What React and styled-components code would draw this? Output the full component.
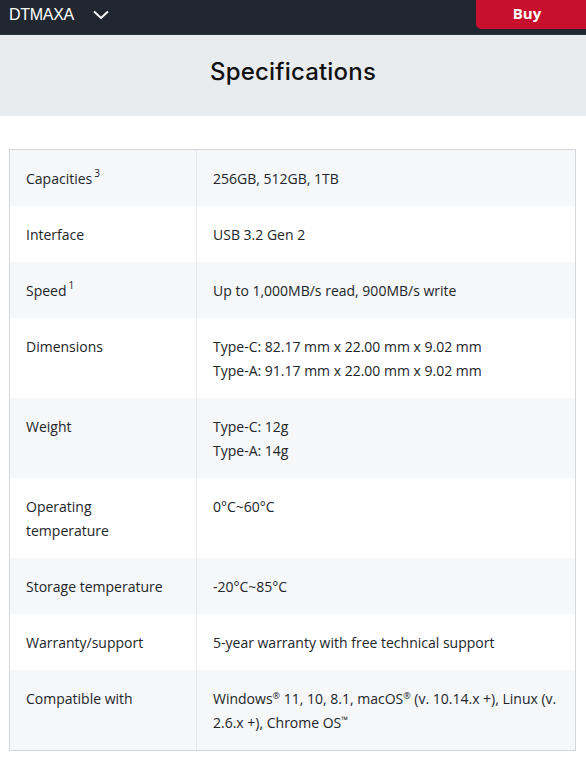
import React from 'react';
import styled, { createGlobalStyle } from 'styled-components';

const GlobalStyle = createGlobalStyle`
  body {
    margin: 0;
    background: #ffffff;
    font-family: "Open Sans", "Noto Sans", sans-serif;
  }
`;

// 상단 바
const TopBar = styled.div`
  height: 34px;
  background: #212731;
  display: flex;
  align-items: flex-start;
  justify-content: space-between;
  border-bottom: 1px solid #2c3440;
`;

const Model = styled.div`
  display: flex;
  align-items: center;
  height: 30px;
  padding-left: 9px;
  color: #ffffff;
  font-family: "Liberation Sans Narrow", "Liberation Sans", sans-serif;
  font-size: 16px;
  letter-spacing: -0.3px;
  gap: 18px;
`;

const BuyButton = styled.button`
  width: 110px;
  height: 29px;
  margin-left: auto;
  border: none;
  border-radius: 0 0 0 5px;
  background: #c8102e;
  color: #ffffff;
  font-family: "Open Sans", sans-serif;
  font-weight: 700;
  font-size: 15px;
  padding: 0 8px 3px 0;
`;

// 제목
const TitleBand = styled.div`
  height: 81px;
  background: #e9ecef;
  display: flex;
  align-items: center;
  justify-content: center;
  padding-bottom: 8px;
  box-sizing: border-box;
`;

const Title = styled.h2`
  margin: 0;
  font-family: Inter, "Noto Sans", sans-serif;
  font-weight: 500;
  font-size: 24px;
  color: #111111;
  letter-spacing: 0.2px;
`;

const Wrap = styled.div`
  padding: 33px 10px 0 9px;
`;

const Table = styled.div`
  border: 1px solid #d4d6d9;
`;

const Row = styled.div`
  display: grid;
  grid-template-columns: 187px 1fr;
  background: ${p => (p.shade ? '#f6f7f9' : '#ffffff')};
`;

const Label = styled.div`
  padding: 17px 16px 15px 16px;
  border-right: 1px solid #e6e8eb;
  font-size: 14px;
  line-height: 24px;
  color: #212529;
`;

const Value = styled.div`
  padding: 17px 16px 15px 16px;
  font-size: 14px;
  line-height: 24px;
  color: #212529;
`;

const Sup = styled.sup`
  font-size: 10px;
  line-height: 0;
  margin-left: 2px;
  vertical-align: 7px;
`;

const Mark = styled.sup`
  font-size: 9px;
  line-height: 0;
  vertical-align: 5px;
`;

function Chevron() {
  return (
    <svg width="18" height="12" viewBox="0 0 18 12" fill="none">
      <path d="M2 2.5 L9 9 L16 2.5" stroke="#ffffff" strokeWidth="1.8" />
    </svg>
  );
}

const rows = [
  { label: <>Capacities<Sup>3</Sup></>, value: '256GB, 512GB, 1TB' },
  { label: 'Interface', value: 'USB 3.2 Gen 2' },
  { label: <>Speed<Sup>1</Sup></>, value: 'Up to 1,000MB/s read, 900MB/s write' },
  {
    label: 'Dimensions',
    value: <>Type-C: 82.17 mm x 22.00 mm x 9.02 mm<br />Type-A: 91.17 mm x 22.00 mm x 9.02 mm</>,
  },
  { label: 'Weight', value: <>Type-C: 12g<br />Type-A: 14g</> },
  { label: <>Operating<br />temperature</>, value: '0°C~60°C' },
  { label: 'Storage temperature', value: '-20°C~85°C' },
  { label: 'Warranty/support', value: '5-year warranty with free technical support' },
  {
    label: 'Compatible with',
    value: (
      <>
        Windows<Mark>®</Mark> 11, 10, 8.1, macOS<Mark>®</Mark> (v. 10.14.x +), Linux (v.
        <br />
        2.6.x +), Chrome OS<Mark>™</Mark>
      </>
    ),
  },
];

function App() {
  return (
    <>
      <GlobalStyle />
      <TopBar>
        <Model>
          DTMAXA
          <Chevron />
        </Model>
        <BuyButton>Buy</BuyButton>
      </TopBar>
      <TitleBand>
        <Title>Specifications</Title>
      </TitleBand>
      <Wrap>
        <Table>
          {rows.map((r, i) => (
            <Row key={i} shade={i % 2 === 0}>
              <Label>{r.label}</Label>
              <Value>{r.value}</Value>
            </Row>
          ))}
        </Table>
      </Wrap>
    </>
  );
}

export default App;
